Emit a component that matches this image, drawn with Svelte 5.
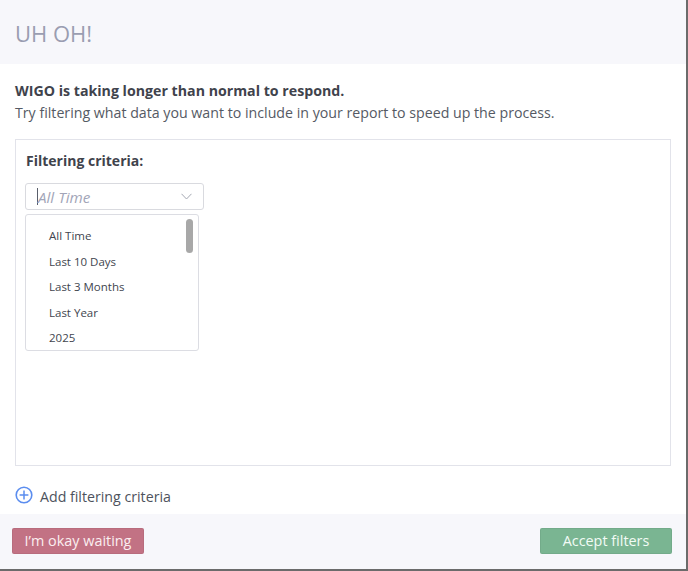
<script>
  let options = ['All Time', 'Last 10 Days', 'Last 3 Months', 'Last Year', '2025']
</script>

<div class="modal">
  <header class="head">UH OH!</header>

  <div class="body">
    <p class="lead"><strong>WIGO is taking longer than normal to respond.</strong></p>
    <p class="hint">Try filtering what data you want to include in your report to speed up the process.</p>

    <section class="criteria">
      <h4>Filtering criteria:</h4>
      <div class="select">
        <span class="caret"></span>
        <span class="placeholder">All Time</span>
        <svg class="chevron" width="11" height="7" viewBox="0 0 11 7">
          <path d="M0.5 0.8 L5.5 6 L10.5 0.8" fill="none" stroke="#a4a8b2" stroke-width="1" />
        </svg>
      </div>
      <div class="menu">
        <ul>
          {#each options as opt}
            <li>{opt}</li>
          {/each}
        </ul>
        <div class="thumb"></div>
      </div>
    </section>

    <div class="add">
      <svg width="18" height="18" viewBox="0 0 18 18">
        <circle cx="9" cy="9" r="7.8" fill="none" stroke="#5b8def" stroke-width="1.6" />
        <path d="M4.6 9 H13.4 M9 4.6 V13.4" stroke="#5b8def" stroke-width="1.5" />
      </svg>
      <span>Add filtering criteria</span>
    </div>
  </div>

  <footer class="foot">
    <button class="wait">I’m okay waiting</button>
    <button class="accept">Accept filters</button>
  </footer>
</div>

<style>
  :global(body) {
    margin: 0;
    background: #fff;
    font-family: "Open Sans", "Noto Sans", sans-serif;
  }
  .modal {
    width: 686px;
    height: 569px;
    display: flex;
    flex-direction: column;
    background: #fff;
    border-right: 2px solid #6b6b6b;
    border-bottom: 2px solid #6b6b6b;
    color: #454a54;
  }
  .head {
    height: 64px;
    box-sizing: border-box;
    flex: none;
    padding: 17px 15px 0;
    background: #f7f7fb;
    color: #9a9db1;
    font-size: 22px;
    line-height: 32px;
  }
  .body {
    flex: 1;
    display: flex;
    flex-direction: column;
    padding: 16px 15px 0;
    min-height: 0;
  }
  .lead, .hint {
    margin: 0;
    font-size: 14.2px;
    line-height: 22px;
    white-space: nowrap;
  }
  .lead strong {
    font-weight: 700;
    color: #3f434c;
  }
  .hint {
    color: #555a64;
  }
  .criteria {
    margin-top: 15px;
    height: 327px;
    box-sizing: border-box;
    border: 1px solid #e2e3ea;
    padding: 10px 9px;
  }
  h4 {
    margin: 0;
    font-size: 14px;
    line-height: 21px;
    font-weight: 700;
    color: #3f434c;
    padding-left: 1px;
  }
  .select {
    margin-top: 12px;
    width: 179px;
    height: 27px;
    box-sizing: border-box;
    border: 1px solid #d9dadf;
    border-radius: 3px;
    display: flex;
    align-items: center;
    padding-left: 11px;
    padding-right: 11px;
  }
  .caret {
    width: 1px;
    height: 17px;
    background: #5a5f6b;
  }
  .placeholder {
    flex: 1;
    font-style: italic;
    font-size: 15.2px;
    color: #a2a5b8;
  }
  .menu {
    position: relative;
    margin-top: 4px;
    width: 174px;
    height: 137px;
    box-sizing: border-box;
    border: 1px solid #dcdde3;
    border-radius: 3px;
    overflow: hidden;
  }
  ul {
    list-style: none;
    margin: 0;
    padding: 8px 0 0 23px;
  }
  li {
    height: 25.6px;
    line-height: 25.6px;
    font-size: 11.5px;
    color: #41454e;
  }
  .thumb {
    position: absolute;
    top: 4px;
    right: 5px;
    width: 7px;
    height: 34px;
    border-radius: 4px;
    background: #a8a8a8;
  }
  .add {
    margin-top: 21px;
    display: flex;
    align-items: center;
    gap: 7px;
    font-size: 14.2px;
    line-height: 20px;
    color: #4d525c;
  }
  .add svg {
    margin: -4px 0 0 0;
  }
  .foot {
    flex: none;
    margin-top: auto;
    height: 55px;
    box-sizing: border-box;
    background: #f7f7fb;
    display: flex;
    justify-content: space-between;
    padding: 14px 14px 0 12px;
  }
  button {
    height: 26px;
    width: 132px;
    padding: 0;
    border: 1px solid rgba(0, 0, 0, 0.05);
    border-radius: 2px;
    font: inherit;
    font-size: 14.4px;
    line-height: 22px;
    color: #fbeef0;
  }
  .wait {
    background: #c27284;
  }
  .accept {
    background: #7ab592;
    color: #f2fbf5;
  }
</style>
